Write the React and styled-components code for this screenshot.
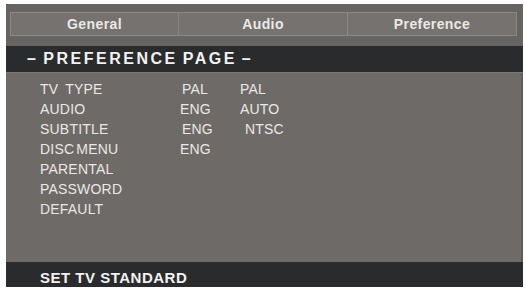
import styled, { createGlobalStyle } from "styled-components";

const GlobalStyle = createGlobalStyle`
  html, body {
    margin: 0;
    padding: 0;
    background: #ffffff;
  }
  body {
    font-family: "Liberation Sans", Arial, sans-serif;
  }
`;

const Screen = styled.div`
  margin: 4px 0 0 6px;
  width: 517px;
  height: 283px;
  display: flex;
  flex-direction: column;
  background: #6e6a67;
  box-shadow: inset -2px 0 0 #5f5c59;
`;

const TabBar = styled.div`
  display: grid;
  grid-template-columns: repeat(3, 1fr);
  padding: 8px 6px 10px 4px;
  background: #676360;
`;

const Tab = styled.div`
  height: 22px;
  display: flex;
  align-items: center;
  justify-content: center;
  background: #76726f;
  border: 1px solid #8b8784;
  border-left-width: ${(p) => (p.$first ? "1px" : "0")};
  color: #ebe9e7;
  font-size: 14px;
  font-weight: bold;
  letter-spacing: 0.4px;
`;

const Band = styled.div`
  height: ${(p) => p.$height}px;
  display: flex;
  align-items: center;
  background: #2a2b2d;
  color: #f2f2f2;
  font-weight: bold;
`;

const PageTitle = styled.div`
  padding-left: 21px;
  font-size: 16px;
  letter-spacing: 2.5px;
  word-spacing: -2px;
`;

const Status = styled.div`
  padding: 5px 0 0 34px;
  font-size: 15px;
  letter-spacing: 0.5px;
`;

const Content = styled.div`
  flex: 1;
  padding: 6px 0 0 34px;
  border-top: 1px solid #7c7875;
`;

const Row = styled.div`
  display: grid;
  grid-template-columns: 140px 60px 60px;
  height: 20px;
  align-items: center;
  color: #eae8e6;
  font-size: 14px;
  letter-spacing: 0.2px;
`;

const Cell = styled.span`
  padding-left: ${(p) => p.$shift || 0}px;
  word-spacing: ${(p) => p.$gap || 0}px;
`;

const rows = [
  { label: "TV TYPE", gap: 3, a: "PAL", aShift: 2, b: "PAL" },
  { label: "AUDIO", a: "ENG", b: "AUTO" },
  { label: "SUBTITLE", a: "ENG", aShift: 2, b: "NTSC", bShift: 5 },
  { label: "DISC MENU", gap: -2, a: "ENG" },
  { label: "PARENTAL" },
  { label: "PASSWORD" },
  { label: "DEFAULT" },
];

export default function App() {
  return (
    <>
      <GlobalStyle />
      <Screen>
        <TabBar>
          <Tab $first>General</Tab>
          <Tab>Audio</Tab>
          <Tab>Preference</Tab>
        </TabBar>
        <Band $height={26}>
          <PageTitle>– PREFERENCE PAGE –</PageTitle>
        </Band>
        <Content>
          {rows.map((r) => (
            <Row key={r.label}>
              <Cell $gap={r.gap}>{r.label}</Cell>
              <Cell $shift={r.aShift}>{r.a}</Cell>
              <Cell $shift={r.bShift}>{r.b}</Cell>
            </Row>
          ))}
        </Content>
        <Band $height={25}>
          <Status>SET TV STANDARD</Status>
        </Band>
      </Screen>
    </>
  );
}
